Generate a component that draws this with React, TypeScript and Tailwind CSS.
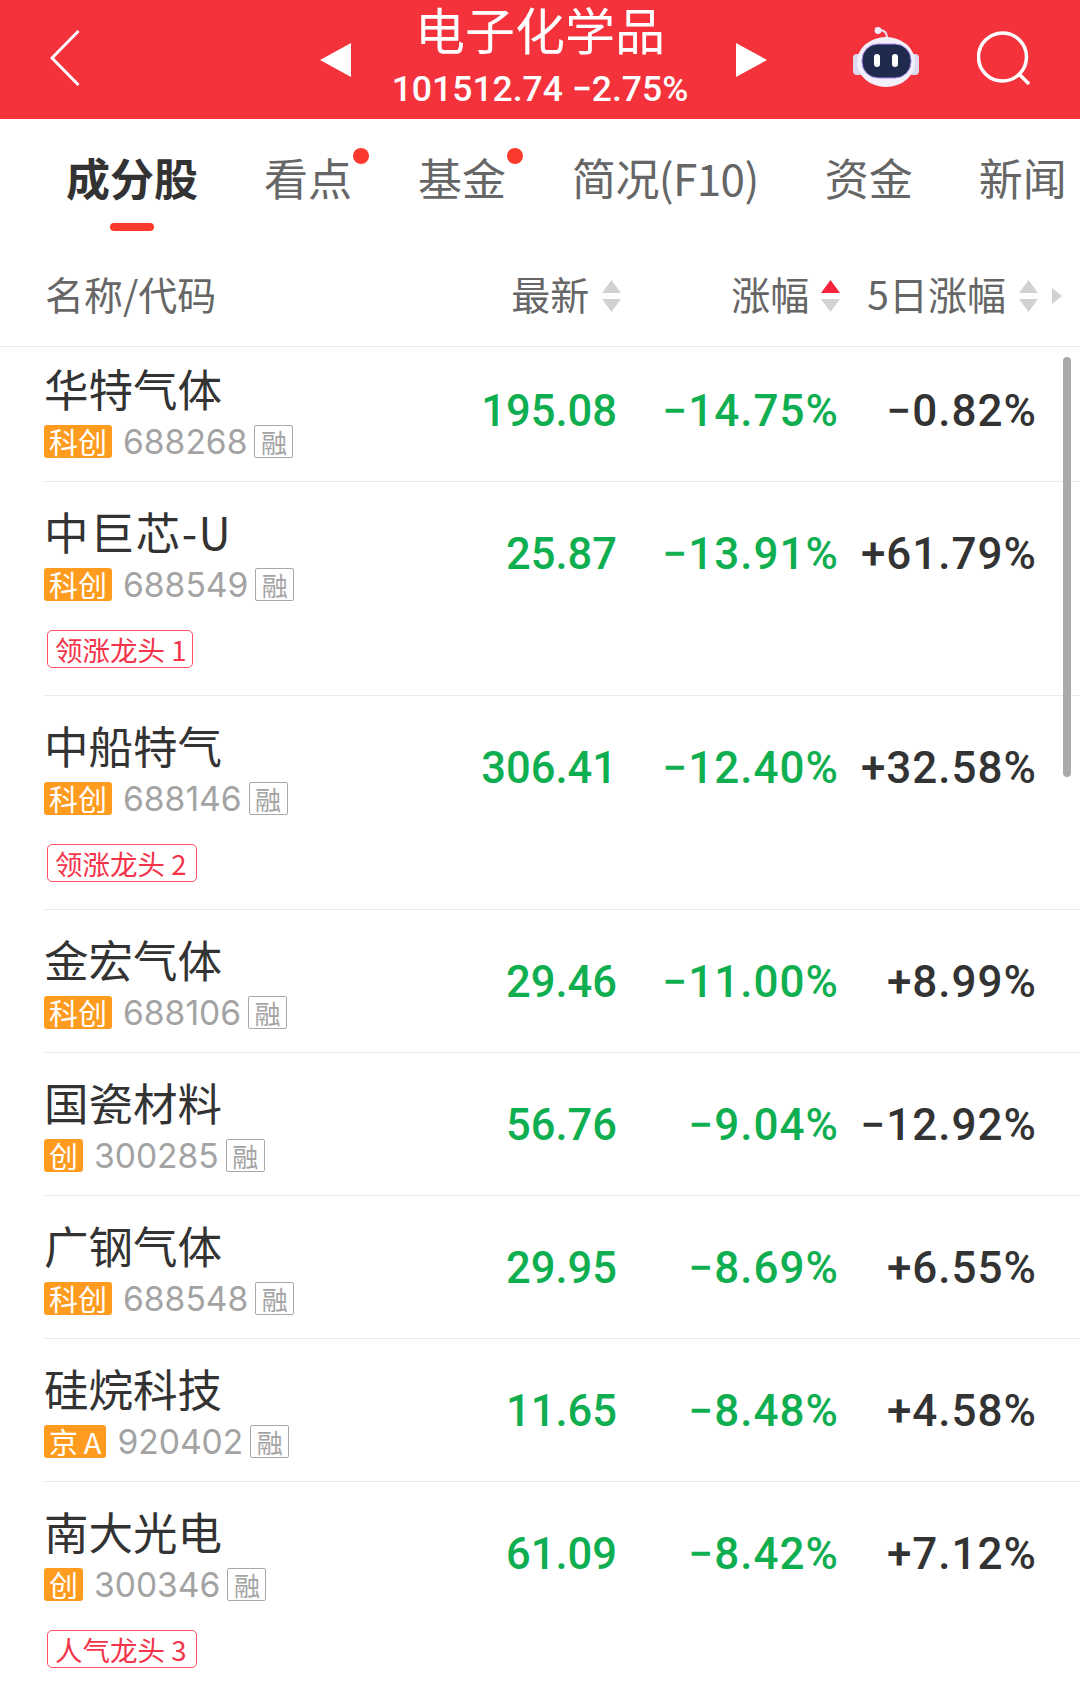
type Stock = {
  name: string;
  nameClass?: string;
  badge: string;
  code: string;
  price: string;
  change: string;
  fiveDay: string;
  tag?: string;
  tagWidth?: string;
};

const STOCKS: Stock[] = [
  { name: '华特气体', badge: '科创', code: '688268', price: '195.08', change: '−14.75%', fiveDay: '−0.82%' },
  { name: '中巨芯-U', nameClass: 'tracking-[1.4px]', badge: '科创', code: '688549', price: '25.87', change: '−13.91%', fiveDay: '+61.79%', tag: '领涨龙头 1', tagWidth: 'w-[146px]' },
  { name: '中船特气', badge: '科创', code: '688146', price: '306.41', change: '−12.40%', fiveDay: '+32.58%', tag: '领涨龙头 2', tagWidth: 'w-[150px]' },
  { name: '金宏气体', badge: '科创', code: '688106', price: '29.46', change: '−11.00%', fiveDay: '+8.99%' },
  { name: '国瓷材料', badge: '创', code: '300285', price: '56.76', change: '−9.04%', fiveDay: '−12.92%' },
  { name: '广钢气体', badge: '科创', code: '688548', price: '29.95', change: '−8.69%', fiveDay: '+6.55%' },
  { name: '硅烷科技', badge: '京\u2009A', code: '920402', price: '11.65', change: '−8.48%', fiveDay: '+4.58%' },
  { name: '南大光电', badge: '创', code: '300346', price: '61.09', change: '−8.42%', fiveDay: '+7.12%', tag: '人气龙头 3', tagWidth: 'w-[150px]' },
];

const CJK = "font-['Noto_Sans_CJK_SC','Noto_Sans',sans-serif]";
const NUM = "font-['Roboto','Noto_Sans_CJK_SC',sans-serif]";

function RobotIcon() {
  return (
    <svg width="66" height="60" viewBox="0 0 66 60" className="shrink-0">
      <path d="M26 3 C31 3 34 6 34 11" fill="none" stroke="#e8e6f6" strokeWidth="2" />
      <circle cx="25" cy="3.5" r="3.4" fill="#efedfa" />
      <rect x="0" y="27" width="10" height="21" rx="4" fill="#dcdbf0" />
      <rect x="56" y="27" width="10" height="21" rx="4" fill="#dcdbf0" />
      <ellipse cx="33" cy="35" rx="29" ry="25" fill="#f2f0fb" />
      <rect x="9" y="17" width="49" height="34" rx="16" fill="#1f2a4c" stroke="#a98cf0" strokeWidth="1" />
      <rect x="21" y="27" width="6" height="13" rx="3" fill="#ffffff" />
      <rect x="39" y="27" width="6" height="13" rx="3" fill="#ffffff" />
    </svg>
  );
}

function SearchIcon() {
  return (
    <svg width="54" height="54" viewBox="0 0 54 54" className="shrink-0">
      <circle cx="25.5" cy="26" r="24" fill="none" stroke="#ffffff" strokeWidth="3.5" />
      <path d="M43 44 L52 53" stroke="#ffffff" strokeWidth="3.5" />
    </svg>
  );
}

function SortArrows({ active }: { active?: boolean }) {
  return (
    <svg width="19" height="33" viewBox="0 0 19 33" className="shrink-0">
      <path d="M9.5 0 L19 13 H0 Z" fill={active ? '#f5233c' : '#d2d2d2'} />
      <path d="M0 19 H19 L9.5 32 Z" fill="#d2d2d2" />
    </svg>
  );
}

function Tab({ label, active, dot, narrow }: { label: string; active?: boolean; dot?: boolean; narrow?: boolean }) {
  return (
    <div className="relative shrink-0 flex flex-col items-center">
      <span className={`text-[44px] leading-[60px] whitespace-nowrap ${narrow ? 'tracking-[-0.6px]' : ''} ${active ? 'font-bold text-[#333333]' : 'text-[#666666]'}`}>
        {label}
      </span>
      {dot && <span className="absolute top-[1px] right-[-17px] w-[16px] h-[16px] rounded-full bg-[#fb3a2e]" />}
      {active && <span className="mt-[16px] w-[44px] h-[8px] rounded-full bg-[#fb3a2e]" />}
    </div>
  );
}

function StockRow({ stock, first }: { stock: Stock; first?: boolean }) {
  return (
    <div className={`ml-[44px] flex items-start border-b border-[#ececec] ${first ? 'pt-[21px] h-[135px]' : 'pt-[29px]'} ${stock.tag ? 'h-[214px]' : first ? '' : 'h-[143px]'}`}>
      <div className="flex-1 min-w-0">
        <div className={`h-[44px] text-[44.5px] leading-[40px] text-[#333333] whitespace-nowrap ${stock.nameClass ?? ''}`}>{stock.name}</div>
        <div className="mt-[13px] flex items-center h-[33px]">
          <span className="h-[33px] px-[5px] flex items-center justify-center rounded-[3px] bg-[#ff9b1f] text-white text-[29px] leading-[33px] whitespace-nowrap">
            {stock.badge}
          </span>
          <span className="ml-[11px] text-[33.6px] leading-[33px] text-[#a3a3a3] font-['Inter',sans-serif]">
            {stock.code}
          </span>
          <span className="ml-[7px] w-[39px] h-[33px] flex items-center justify-center rounded-[2px] border border-[#a8a8a8] text-[26px] leading-[31px] text-[#a3a3a3]">
            融
          </span>
        </div>
        {stock.tag && (
          <div className={`mt-[29px] ml-[3px] h-[38px] pl-[7px] flex items-center rounded-[5px] border border-[#ff4d5e] text-[#f5334a] text-[27.5px] leading-[36px] whitespace-nowrap ${stock.tagWidth}`}>
            {stock.tag}
          </div>
        )}
      </div>
      <div className={`w-[190px] text-right text-[43.5px] leading-[88px] font-medium text-[#0fae50] ${NUM}`}>{stock.price}</div>
      <div className={`w-[222px] text-right text-[44px] leading-[86px] font-medium tracking-[1px] text-[#0fae50] ${NUM}`}>{stock.change}</div>
      <div className={`w-[198px] mr-[43px] text-right text-[44px] leading-[86px] font-medium tracking-[1px] text-[#333333] ${NUM}`}>{stock.fiveDay}</div>
    </div>
  );
}

export default function App() {
  return (
    <div className={`relative w-[1080px] h-[1681px] overflow-hidden bg-white ${CJK}`}>
      <header className="h-[119px] bg-[#f4323c] flex items-center text-white">
        <svg width="30" height="56" viewBox="0 0 30 56" className="ml-[50px] mt-[-4px] shrink-0">
          <path d="M28.5 1 L2 28 L28.5 55" fill="none" stroke="#ffffff" strokeWidth="3" />
        </svg>
        <svg width="31" height="34" viewBox="0 0 31 34" className="ml-[240px] shrink-0">
          <path d="M31 0 V34 L0 17 Z" fill="#ffffff" />
        </svg>
        <div className="w-[385px] pr-[7px] flex flex-col items-center">
          <div className="text-[50px] leading-[50px] whitespace-nowrap">电子化学品</div>
          <div className={`mt-[8px] text-[35.5px] leading-[56px] font-medium whitespace-nowrap ${NUM}`}>101512.74 −2.75%</div>
        </div>
        <svg width="31" height="34" viewBox="0 0 31 34" className="shrink-0">
          <path d="M0 0 V34 L31 17 Z" fill="#ffffff" />
        </svg>
        <div className="ml-[86px] mt-[-6px]">
          <RobotIcon />
        </div>
        <div className="ml-[58px] mt-[-4px]">
          <SearchIcon />
        </div>
      </header>

      <nav className="h-[121px] pl-[66px] pt-[28px] flex items-start gap-[66px] overflow-hidden">
        <Tab label="成分股" active />
        <Tab label="看点" dot />
        <Tab label="基金" dot />
        <Tab label="简况(F10)" narrow />
        <Tab label="资金" />
        <Tab label="新闻" />
      </nav>

      <div className="h-[107px] pl-[45px] flex items-center border-b border-[#ececec] text-[#666666] text-[39px] leading-[50px]">
        <span className="flex-1">名称/代码</span>
        <span>最新</span>
        <span className="ml-[13px] mt-[6px]"><SortArrows /></span>
        <span className="ml-[110px]">涨幅</span>
        <span className="ml-[12px] mt-[6px]"><SortArrows active /></span>
        <span className="ml-[27px]">5日涨幅</span>
        <span className="ml-[13px] mt-[6px]"><SortArrows /></span>
        <svg width="10" height="16" viewBox="0 0 10 16" className="ml-[14px] mr-[18px] mt-[5px] shrink-0">
          <path d="M0 0 L10 8 L0 16 Z" fill="#d2d2d2" />
        </svg>
      </div>

      {STOCKS.map((stock, i) => (
        <StockRow key={stock.code} stock={stock} first={i === 0} />
      ))}

      <div className="absolute left-[1063px] top-[357px] w-[8px] h-[420px] rounded-full bg-[#aaaaaa]" />
    </div>
  );
}
